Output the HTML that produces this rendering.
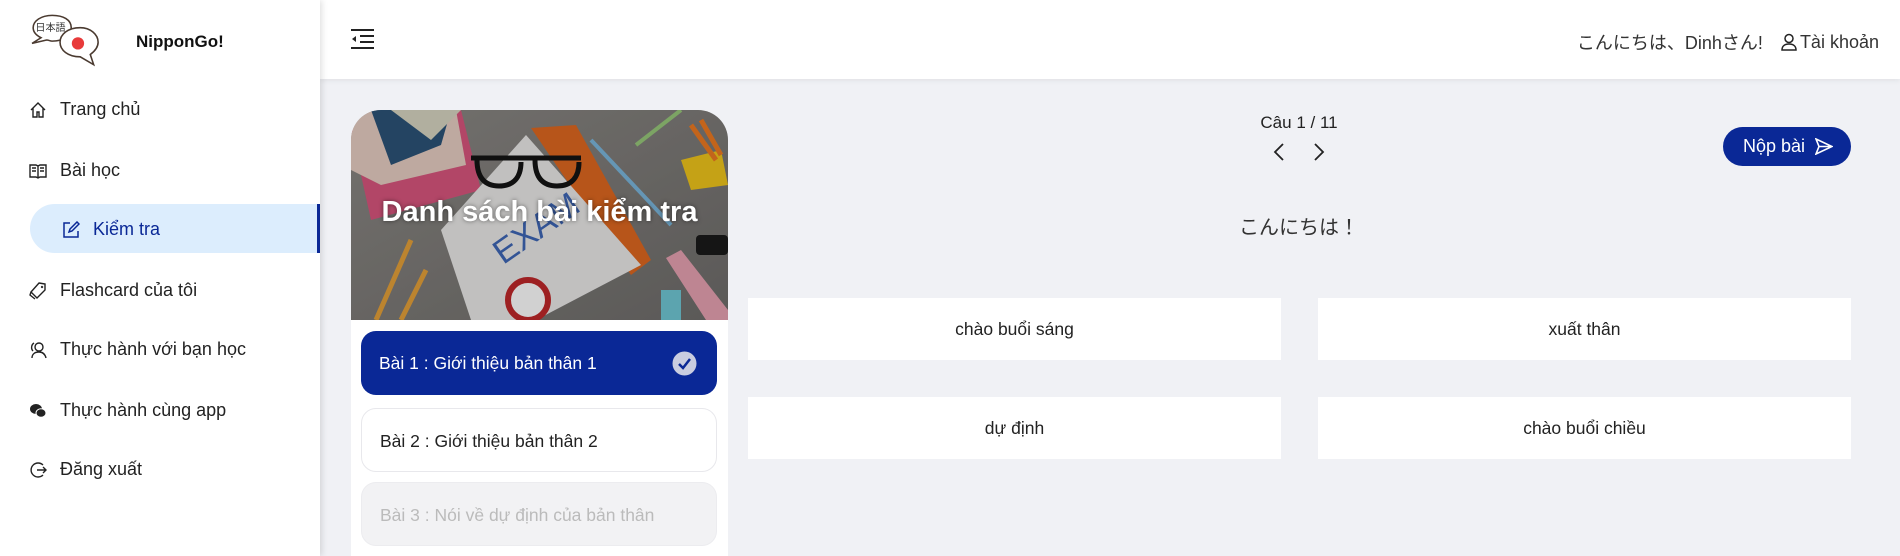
<!DOCTYPE html>
<html><head><meta charset="utf-8"><style>
*{box-sizing:border-box;margin:0;padding:0}
html{overflow:hidden;height:556px}
body{width:1900px;height:556px;overflow:hidden;background:#f0f1f5;font-family:"Liberation Sans","Noto Sans CJK JP",sans-serif;position:relative;color:#222}
.side{position:absolute;left:0;top:0;width:320px;height:556px;background:#fff;box-shadow:2px 0 6px rgba(0,0,0,.12);z-index:3}
.brand{position:absolute;left:136px;top:32px;font-weight:bold;font-size:17px;color:#111}
.nav{position:absolute;left:29px;font-size:18px;color:#222;display:flex;align-items:center}
.nav svg{width:18px;height:18px;margin-right:13px}
.active{position:absolute;left:30px;top:204px;width:290px;height:49px;background:#dcedfd;border-radius:25px 0 0 25px;border-right:3px solid #0a2896}
.header{position:absolute;left:320px;top:0;right:0;height:79px;background:#fff;box-shadow:0 2px 5px rgba(0,0,0,.06);z-index:2}
.card{position:absolute;left:351px;top:110px;width:377px;height:446px;background:#fff;border-radius:30px 30px 0 0;overflow:hidden}
.title{position:absolute;left:0;top:86px;width:377px;text-align:center;color:#fff;font-weight:bold;font-size:29px;text-shadow:0 0 4px rgba(0,0,0,.5)}
.item{position:absolute;left:10px;width:356px;height:64px;border-radius:15px;font-size:17.5px;padding-left:18px;line-height:64px}
.ans{position:absolute;width:533px;height:62px;background:#fff;text-align:center;line-height:62px;font-size:17.5px;color:#222}
</style></head><body>
<div class="side">
<svg style="position:absolute;left:28px;top:12px" width="82" height="56" viewBox="0 0 70 50">
<path d="M20 3c-10 0-17 5-17 11 0 4 3 7 7 9l-8 5 13-3c2 0 3 1 5 1 10 0 17-5 17-12S30 3 20 3z" fill="#fff" stroke="#4a3a30" stroke-width="1.4"/>
<path d="M45 14c-11 0-18 6-18 13s7 13 18 13l12 7-3-9c4-3 7-7 7-11 0-7-7-13-16-13z" fill="#fff" stroke="#4a3a30" stroke-width="1.4"/>
<circle cx="43" cy="28" r="5.5" fill="#e83a3a"/>
<text x="5" y="17" font-size="9" fill="#333" font-family="Noto Sans CJK JP">日本語</text>
</svg>
<div class="brand">NipponGo!</div>
<div class="nav" style="top:99px"><svg viewBox="0 0 18 18" fill="none" stroke="#222" stroke-width="1.4"><path d="M2 9L9 2l7 7M4 7v9h4v-5h2v5h4V7"/></svg>Trang chủ</div>
<div class="nav" style="top:160px"><svg viewBox="0 0 18 18" fill="none" stroke="#222" stroke-width="1.4"><path d="M1 3h6l2 1 2-1h6v12h-6l-2 1-2-1H1zM9 4v12M3 6h4M3 9h4M11 6h4M11 9h4"/></svg>Bài học</div>
<div class="active"></div>
<div class="nav" style="top:219px;left:62px;color:#0a2896"><svg viewBox="0 0 18 18" fill="none" stroke="#0a2896" stroke-width="1.5"><path d="M8 2H2v14h14v-6M7 11l1-3 7-7 2 2-7 7z"/></svg>Kiểm tra</div>
<div class="nav" style="top:280px"><svg viewBox="0 0 18 18" fill="none" stroke="#222" stroke-width="1.4"><path d="M10 1l6 1 0 6-8 8-6-6zM13 4.5a.5.5 0 1 0 .1 0M2 10l-1 3 5 4"/></svg>Flashcard của tôi</div>
<div class="nav" style="top:339px"><svg viewBox="0 0 18 18" fill="none" stroke="#222" stroke-width="1.4"><circle cx="10" cy="6" r="4"/><path d="M3 17c0-4 3-6 7-6s6 2 7 6M5 2C2 4 2 8 4 10"/></svg>Thực hành với bạn học</div>
<div class="nav" style="top:400px"><svg viewBox="0 0 18 18" fill="#222"><ellipse cx="7" cy="7" rx="6" ry="5"/><ellipse cx="12" cy="11" rx="5" ry="4.3" stroke="#fff" stroke-width="1"/></svg>Thực hành cùng app</div>
<div class="nav" style="top:459px"><svg viewBox="0 0 18 18" fill="none" stroke="#222" stroke-width="1.4"><path d="M14 4A7 7 0 1 0 14 14M8 9h9M14 6l3 3-3 3"/></svg>Đăng xuất</div>
</div>
<div class="header">
<svg style="position:absolute;left:31px;top:29px" width="23" height="20" viewBox="0 0 23 20" fill="none" stroke="#222" stroke-width="2"><path d="M0 1h23M9 7h14M9 13h14M0 19h23"/><path d="M5 7l-4 3 4 3z" fill="#222" stroke="none"/></svg>
<div style="position:absolute;right:21px;top:29px;font-size:18px;color:#333;display:flex;align-items:center"><span style="margin-right:18px">こんにちは、Dinhさん!</span><svg width="16" height="18" viewBox="0 0 16 18" fill="none" stroke="#222" stroke-width="1.5"><circle cx="8" cy="5.5" r="4"/><path d="M1 17c0-4 3-6 7-6s7 2 7 6z"/></svg><span style="margin-left:3px">Tài khoản</span></div>
</div>
<div class="card">
<svg width="377" height="210" viewBox="0 0 377 210" style="position:absolute;left:0;top:0">
<defs><linearGradient id="g" x1="0" y1="0" x2="1" y2="1"><stop offset="0" stop-color="#8d8a86"/><stop offset="1" stop-color="#6f6d6b"/></linearGradient></defs>
<rect width="377" height="210" fill="url(#g)"/>
<polygon points="0,20 110,0 130,80 20,110" fill="#d9567e"/>
<polygon points="0,0 105,0 115,55 30,75 0,60" fill="#e8cfc4"/>
<polygon points="20,0 100,0 90,35 40,55" fill="#2d5478"/>
<polygon points="40,0 110,0 80,30" fill="#d8d6c2"/>
<polygon points="180,18 225,15 300,150 280,165" fill="#e06820"/>
<polygon points="90,120 175,25 290,155 185,210 120,210" fill="#ecebea"/>
<path d="M120 48h110M126 50c0 18 8 26 22 26s22-8 22-24M184 50c0 18 8 26 22 26s22-8 22-24" fill="none" stroke="#141414" stroke-width="5"/>
<text x="145" y="148" font-size="34" fill="#3f67b6" transform="rotate(-35 160 140)">EXAM</text>
<circle cx="177" cy="190" r="20" fill="#fff" stroke="#c0282a" stroke-width="6"/>
<polygon points="330,50 370,40 377,75 340,80" fill="#f1c61c"/>
<path d="M340 15l25 35M350 10l20 35" stroke="#ee7a22" stroke-width="5"/>
<path d="M240 30l80 85" stroke="#7cb7dd" stroke-width="4"/>
<path d="M285 35l45-35" stroke="#98c97a" stroke-width="4"/>
<path d="M60 130l-35 80M75 160l-25 50" stroke="#e6a23a" stroke-width="5"/>
<polygon points="315,148 330,140 377,200 377,210 355,210" fill="#e8a3b3"/>
<rect x="345" y="125" width="32" height="20" rx="4" fill="#1a1a1a"/>
<rect x="310" y="180" width="20" height="30" fill="#71c8d6"/>
<rect width="377" height="210" fill="rgba(0,0,0,.18)"/>
</svg>
<div class="title">Danh sách bài kiểm tra</div>
<div class="item" style="top:221px;background:#0a2896;color:#fff">Bài 1 : Giới thiệu bản thân 1
<svg style="position:absolute;right:20px;top:20px" width="25" height="25" viewBox="0 0 25 25"><circle cx="12.5" cy="12.5" r="12" fill="#c9cde0"/><path d="M7 13l4 4 7-9" fill="none" stroke="#0a2896" stroke-width="2.5"/></svg></div>
<div class="item" style="top:298px;background:#fff;border:1px solid #e8e8ec;color:#222">Bài 2 : Giới thiệu bản thân 2</div>
<div class="item" style="top:372px;background:#f2f2f4;color:#bbb;border:1px solid #ececef">Bài 3 : Nói về dự định của bản thân</div>
</div>
<div style="position:absolute;left:1199px;top:113px;width:200px;text-align:center;font-size:17px;color:#222">Câu 1 / 11</div>
<svg style="position:absolute;left:1271px;top:142px" width="60" height="20" viewBox="0 0 60 20" fill="none" stroke="#222" stroke-width="1.8"><path d="M12 2L4 10l8 8M44 2l8 8-8 8"/></svg>
<div style="position:absolute;left:1723px;top:127px;width:128px;height:39px;background:#0a2896;border-radius:20px;color:#fff;font-size:18px;line-height:39px;padding-left:20px">Nộp bài<svg style="position:absolute;right:18px;top:11px" width="18" height="17" viewBox="0 0 18 17" fill="none" stroke="#fff" stroke-width="1.6"><path d="M1 1l16 7.5L1 16l3-7.5zM4 8.5h13"/></svg></div>
<div style="position:absolute;left:1099px;top:211px;width:400px;text-align:center;font-size:20px;color:#333">こんにちは！</div>
<div class="ans" style="left:748px;top:298px">chào buổi sáng</div>
<div class="ans" style="left:1318px;top:298px">xuất thân</div>
<div class="ans" style="left:748px;top:397px">dự định</div>
<div class="ans" style="left:1318px;top:397px">chào buổi chiều</div>
</body></html>
